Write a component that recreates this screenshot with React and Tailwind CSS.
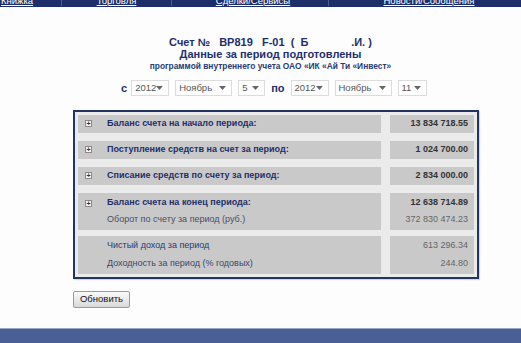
import React from 'react';

const navLinks = [
  { label: 'Книжка', w: 'w-[62px] justify-start pl-[1px]' },
  { label: 'Торговля', w: 'w-[110px] justify-center' },
  { label: 'Сделки/Сервисы', w: 'w-[157px] justify-center pl-[6px]' },
  { label: 'Новости/Сообщения', w: 'flex-1 justify-center pl-[8px]' },
];

const Plus = () => (
  <span className="w-[7px] h-[7px] border border-[#8a8a8a] bg-[#f4f4f4] flex items-center justify-center text-[7px] leading-none text-[#333] mr-[15px] shrink-0">
    +
  </span>
);

const Select = ({ value, w }) => (
  <div className={`${w} h-[16px] border border-[#dcdcdc] bg-white flex items-center justify-between pl-[3px] pr-[5px] text-[9.5px] text-[#555]`}>
    <span>{value}</span>
    <svg width="7" height="4" viewBox="0 0 7 4"><path d="M0 0h7L3.5 4z" fill="#666" /></svg>
  </div>
);

const SingleRow = ({ label, value }) => (
  <div className="grid grid-cols-[303px_84px] gap-x-[9px]">
    <div className="h-[18px] bg-[#c9c9c9] flex items-center pl-[7px] text-[9px] font-bold text-[#1d2f6a]">
      <Plus />
      {label}
    </div>
    <div className="h-[18px] bg-[#c9c9c9] flex items-center justify-end pr-[6px] text-[9px] font-bold text-[#333]">
      {value}
    </div>
  </div>
);

export default function App() {
  return (
    <div className="w-[521px] h-[343px] bg-[#fdfdfd] flex flex-col overflow-hidden" style={{ fontFamily: '"Liberation Sans", Arial, sans-serif' }}>
      {/* top menu, mostly scrolled away */}
      <div className="h-[7px] bg-[#1c2f68] overflow-hidden shrink-0">
        <div className="flex -mt-[5px] h-[12px] items-start">
          {navLinks.map((l, i) => (
            <div key={l.label} className={`${l.w} flex ${i < 3 ? 'border-r border-[#4b5d92]' : ''} text-[9.5px] leading-[11px] text-white underline`}>
              {l.label}
            </div>
          ))}
        </div>
      </div>

      <div className="flex-1 flex flex-col">
        <div className="ml-[73px] w-[405px] pt-[29px] pr-[10px] flex flex-col items-center text-[#1d2f6a]">
          <div className="text-[11px] font-bold leading-[12px] whitespace-pre">Счет №   BP819   F-01  (  Б              .И. )</div>
          <div className="text-[11px] font-bold leading-[12px]">Данные за период подготовлены</div>
          <div className="text-[8.4px] font-bold leading-[12px] text-[#2a3a72]">программой внутреннего учета ОАО «ИК «Ай Ти «Инвест»</div>
        </div>

        <div className="mt-[8px] ml-[121px] flex items-center gap-[6px] text-[#1d2f6a]">
          <span className="text-[11px] font-bold -mr-[2px]">с</span>
          <Select value="2012" w="w-[38px]" />
          <Select value="Ноябрь" w="w-[57px]" />
          <Select value="5" w="w-[27px]" />
          <span className="text-[11px] font-bold">по</span>
          <Select value="2012" w="w-[38px]" />
          <Select value="Ноябрь" w="w-[57px]" />
          <Select value="11" w="w-[29px]" />
        </div>

        <div className="mt-[13px] ml-[73px] w-[406px] border-2 border-[#22355f] bg-[#ebebeb] p-[3px] flex flex-col gap-[8px] shadow-[1px_1px_1px_rgba(0,0,0,0.15)]">
          <SingleRow label="Баланс счета на начало периода:" value="13 834 718.55" />
          <SingleRow label="Поступление средств на счет за период:" value="1 024 700.00" />
          <SingleRow label="Списание средств по счету за период:" value="2 834 000.00" />

          <div className="grid grid-cols-[303px_84px] gap-x-[9px]">
            <div className="bg-[#c9c9c9] flex flex-col pl-[7px] text-[9px] pt-[2px] pb-[1px]">
              <div className="h-[17px] flex items-center font-bold text-[#1d2f6a]">
                <Plus />
                Баланс счета на конец периода:
              </div>
              <div className="h-[17px] flex items-center pl-[22px] text-[#4a4f66]">Оборот по счету за период (руб.)</div>
            </div>
            <div className="bg-[#c9c9c9] flex flex-col items-end pr-[6px] text-[9px] pt-[2px] pb-[1px]">
              <div className="h-[17px] flex items-center font-bold text-[#333]">12 638 714.89</div>
              <div className="h-[17px] flex items-center text-[#666]">372 830 474.23</div>
            </div>
          </div>

          <div className="grid grid-cols-[303px_84px] gap-x-[9px] -mt-[2px]">
            <div className="bg-[#c9c9c9] flex flex-col pl-[29px] text-[9px] py-[1px]">
              <div className="h-[18px] flex items-center text-[#2a3a72]">Чистый доход за период</div>
              <div className="h-[18px] flex items-center text-[#3a4670]">Доходность за период (% годовых)</div>
            </div>
            <div className="bg-[#c9c9c9] flex flex-col items-end pr-[6px] text-[9px] py-[1px]">
              <div className="h-[18px] flex items-center text-[#666]">613 296.34</div>
              <div className="h-[18px] flex items-center text-[#666]">244.80</div>
            </div>
          </div>
        </div>

        <div className="mt-[12px] ml-[73px]">
          <button className="h-[17px] w-[57px] border border-[#9a9a9a] rounded-[2px] bg-gradient-to-b from-[#fafafa] to-[#d9d9d9] text-[9.5px] text-[#111] flex items-center justify-center">
            Обновить
          </button>
        </div>
      </div>

      <div className="h-[15px] bg-[#4b5f97] border-t border-[#9aa6c6] shrink-0" />
    </div>
  );
}
